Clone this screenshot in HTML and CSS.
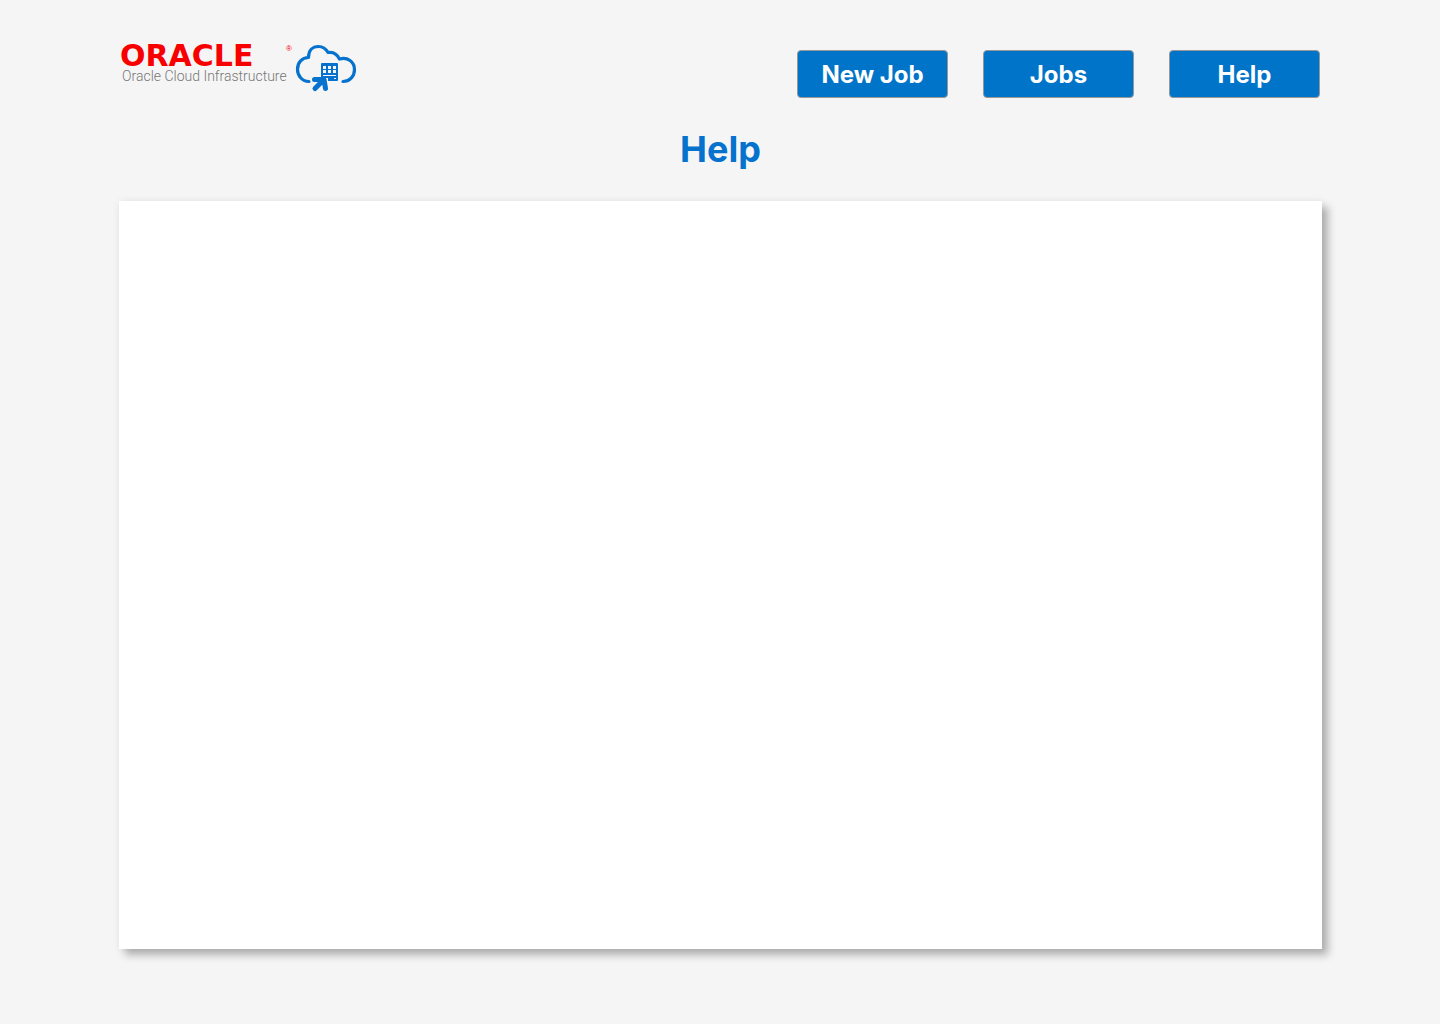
FILE: index.html
```html
<!DOCTYPE html>
<html lang="en">
<head>
<meta charset="utf-8">
<meta name="viewport" content="width=device-width, initial-scale=1">
<title>Help</title>
<link rel="stylesheet" href="styles.css">
</head>
<body>
<header class="header">
  <a class="brand" href="#">
    <span class="brand-words">
      <span class="brand-name">ORACLE<span class="brand-mark">®</span></span>
      <span class="brand-product">Oracle Cloud Infrastructure</span>
    </span>
    <svg class="brand-cloud" width="62" height="49" viewBox="0 0 62 49" aria-hidden="true">
      <path d="M14 37.500C7 37.500 2.500 31.500 2.500 25.500C2.500 18.500 7 13.500 13.500 13.500C13.500 6.500 17.500 2.500 23.500 2.500C28.500 2.500 31 5 33 8.500C38.500 7.500 42 10 44.500 15C52.500 12.500 59.500 18 59.500 25.500C59.500 32.500 54.500 37.500 48 37.500" fill="none" stroke="#0572ce" stroke-width="3.200" stroke-linecap="round" stroke-linejoin="round"/>
      <path fill="#0572ce" fill-rule="evenodd" d="M27 19H42Q43 19 43 20V36Q43 37 42 37H33V34H26V20Q26 19 27 19ZM28 22V25H31V22ZM33 22V25H36V22ZM38 22V25H41V22ZM28 26V29H31V26ZM33 26V29H36V26ZM38 26V29H41V26ZM28 31V32H41V31ZM39 34V35H41V34Z"/>
      <path d="M19.500 35.500H29L30.500 44.500M28.500 36L20 44.500" fill="none" stroke="#0572ce" stroke-width="5" stroke-linecap="round" stroke-linejoin="round"/>
    </svg>
  </a>
  <nav class="nav">
    <button class="nav-button" type="button">New Job</button>
    <button class="nav-button" type="button">Jobs</button>
    <button class="nav-button" type="button">Help</button>
  </nav>
</header>
<main class="main">
  <h1 class="title">Help</h1>
  <section class="panel" aria-label="Help content"></section>
</main>
</body>
</html>
```
FILE: styles.css
```css
* { box-sizing: border-box; }

body {
  margin: 0;
  min-height: 100vh;
  display: flex;
  flex-direction: column;
  background: #f5f5f5;
  font-family: Inter, "Liberation Sans", sans-serif;
}

.header {
  display: flex;
  justify-content: space-between;
  align-items: flex-start;
  padding: 44px 120px 0;
}

.brand {
  display: flex;
  gap: 3px;
  text-decoration: none;
}

.brand-words {
  display: flex;
  flex-direction: column;
  min-width: 172px;
}

.brand-name {
  display: flex;
  justify-content: space-between;
  color: #f80000;
  font: bold 30px/24px "DejaVu Sans", sans-serif;
}

.brand-mark {
  font: 8px/10px "Liberation Sans", sans-serif;
}

.brand-product {
  padding-left: 2px;
  color: #777;
  font: 300 14px/16px Roboto, sans-serif;
  white-space: nowrap;
}

.nav {
  display: flex;
  gap: 35px;
  padding-top: 6px;
}

.nav-button {
  width: 151px;
  height: 48px;
  padding: 2px 0 0;
  border: 1px solid #979797;
  border-radius: 4px;
  background: #0074c8;
  color: #fff;
  font: 700 24px/30px Inter, sans-serif;
}

.main {
  flex: 1;
  display: flex;
  flex-direction: column;
  padding: 29px 118px 75px 119px;
}

.title {
  margin: 0 0 30px;
  color: #0572ce;
  font-size: 36px;
  line-height: 44px;
  font-weight: 700;
  font-optical-sizing: none;
  text-align: center;
}

.panel {
  flex: 1;
  background: #fff;
  box-shadow: 6px 6px 8px rgba(0, 0, 0, 0.28), 0 0 8px rgba(0, 0, 0, 0.06);
}
```
